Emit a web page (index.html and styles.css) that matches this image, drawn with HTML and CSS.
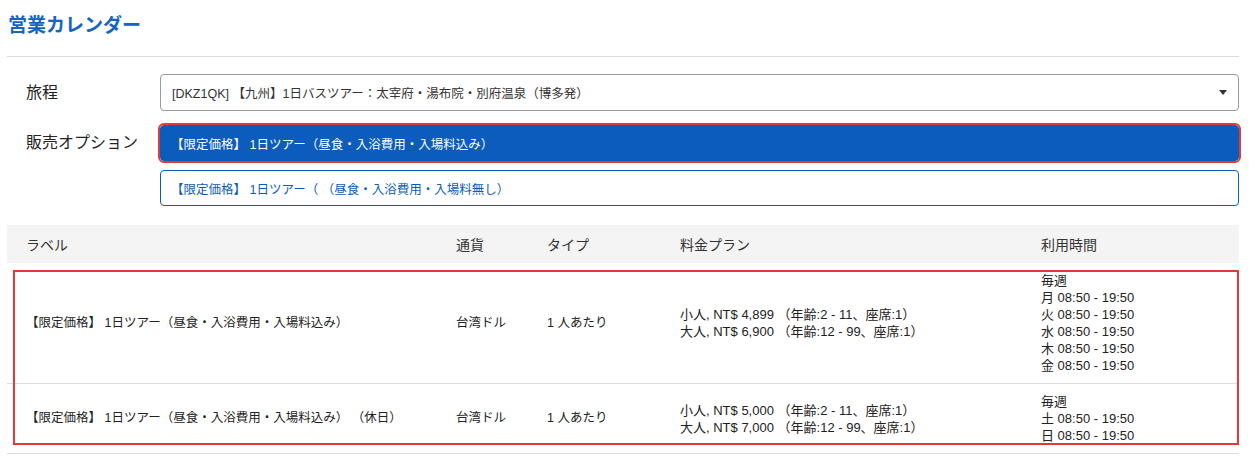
FILE: index.html
```html
<!DOCTYPE html>
<html lang="ja">
<head>
<meta charset="utf-8">
<title>営業カレンダー</title>
<link rel="stylesheet" href="styles.css">
</head>
<body>
<div class="page">
  <h1 class="title">営業カレンダー</h1>
  <hr class="sep">

  <div class="form">
    <div class="form-row">
      <div class="form-label">旅程</div>
      <div class="form-control">
        <div class="select">
          <span class="select-text">[DKZ1QK] 【九州】1日バスツアー：太宰府・湯布院・別府温泉（博多発）</span>
          <span class="select-arrow"></span>
        </div>
      </div>
    </div>
    <div class="form-row">
      <div class="form-label">販売オプション</div>
      <div class="form-control options">
        <div class="option option-active">【限定価格】 1日ツアー（昼食・入浴費用・入場料込み）</div>
        <div class="option">【限定価格】 1日ツアー（ （昼食・入浴費用・入場料無し）</div>
      </div>
    </div>
  </div>

  <div class="table">
    <div class="thead">
      <div class="cell first">ラベル</div>
      <div class="cell">通貨</div>
      <div class="cell">タイプ</div>
      <div class="cell">料金プラン</div>
      <div class="cell">利用時間</div>
    </div>
    <div class="tbody">
      <div class="trow">
        <div class="cell first">【限定価格】 1日ツアー（昼食・入浴費用・入場料込み）</div>
        <div class="cell">台湾ドル</div>
        <div class="cell">1 人あたり</div>
        <div class="cell lines">
          <div>小人, NT$ 4,899 （年齢:2 - 11、座席:1）</div>
          <div>大人, NT$ 6,900 （年齢:12 - 99、座席:1）</div>
        </div>
        <div class="cell lines">
          <div>毎週</div>
          <div>月 08:50 - 19:50</div>
          <div>火 08:50 - 19:50</div>
          <div>水 08:50 - 19:50</div>
          <div>木 08:50 - 19:50</div>
          <div>金 08:50 - 19:50</div>
        </div>
      </div>
      <div class="trow">
        <div class="cell first">【限定価格】 1日ツアー（昼食・入浴費用・入場料込み） （休日）</div>
        <div class="cell">台湾ドル</div>
        <div class="cell">1 人あたり</div>
        <div class="cell lines">
          <div>小人, NT$ 5,000 （年齢:2 - 11、座席:1）</div>
          <div>大人, NT$ 7,000 （年齢:12 - 99、座席:1）</div>
        </div>
        <div class="cell lines">
          <div>毎週</div>
          <div>土 08:50 - 19:50</div>
          <div>日 08:50 - 19:50</div>
        </div>
      </div>
      <div class="highlight"></div>
    </div>
  </div>
</div>
</body>
</html>
```

FILE: styles.css
```css
* { box-sizing: border-box; }

html, body {
  margin: 0;
  padding: 0;
  background: #ffffff;
}

body {
  font-family: "Liberation Sans", "Noto Sans CJK JP", sans-serif;
  color: #222222;
}

.page {
  width: 1232px;
  margin-left: 7px;
}

.title {
  margin: 0;
  padding-top: 14px;
  padding-left: 1px;
  height: 37px;
  font-size: 19px;
  line-height: 24px;
  font-weight: bold;
  color: #1565c0;
}

.sep {
  margin: 19px 0 0 0;
  border: 0;
  border-top: 1px solid #dddddd;
  height: 0;
}

.form {
  padding-top: 17px;
}

.form-row {
  display: flex;
  align-items: flex-start;
  margin-bottom: 14px;
}

.form-label {
  width: 153px;
  padding-left: 19px;
  font-size: 16px;
  line-height: 37px;
  color: #222222;
  flex-shrink: 0;
}

.form-control {
  flex: 1;
}

.select {
  height: 37px;
  border: 1px solid #9a9a9a;
  border-radius: 4px;
  display: flex;
  align-items: center;
  justify-content: space-between;
  padding: 0 11px 0 11px;
}

.select-text {
  font-size: 12.5px;
  color: #333333;
}

.select-arrow {
  width: 0;
  height: 0;
  border-left: 4.5px solid transparent;
  border-right: 4.5px solid transparent;
  border-top: 5px solid #333333;
}

.options {
  display: flex;
  flex-direction: column;
  gap: 9px;
}

.form-row:last-child .form-label {
  line-height: 36px;
}

.option {
  height: 36px;
  border: 1px solid #0b5cbd;
  border-radius: 4px;
  color: #0b5cbd;
  font-size: 12.5px;
  display: flex;
  align-items: center;
  padding-left: 10px;
}

.option-active {
  background: #0b5cbd;
  color: #ffffff;
  outline: 2px solid #e53935;
  outline-offset: 0;
}

.table {
  margin-top: 19px;
}

.thead {
  display: grid;
  grid-template-columns: 449px 91px 133px 361px 1fr;
  background: #f4f4f4;
  height: 38px;
  align-items: center;
  font-size: 14px;
  color: #333333;
}

.tbody {
  position: relative;
}

.trow {
  display: grid;
  grid-template-columns: 449px 91px 133px 361px 1fr;
  align-items: center;
  border-bottom: 1px solid #dddddd;
  padding: 9px 0;
  font-size: 12.5px;
  color: #222222;
}

.cell.first {
  padding-left: 19px;
}

.trow .cell {
  line-height: 17px;
}

.trow .lines {
  font-size: 13px;
}

.lines div {
  line-height: 17px;
}

.highlight {
  position: absolute;
  left: 6px;
  top: 7px;
  width: 1226px;
  height: 175px;
  border: 2px solid #e53935;
  pointer-events: none;
}
```
